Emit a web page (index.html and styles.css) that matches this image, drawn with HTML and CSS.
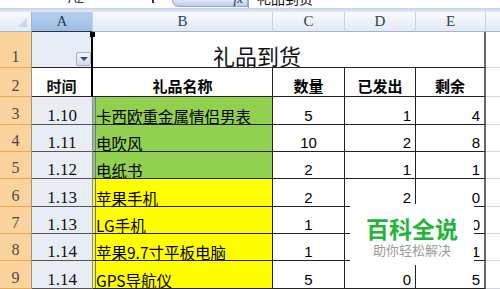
FILE: index.html
```html
<!DOCTYPE html>
<html lang="zh-CN">
<head>
<meta charset="utf-8">
<title>礼品到货</title>
<link rel="stylesheet" href="styles.css">
</head>
<body>
<div class="app">
  <div class="fbar">
    <div class="namebox"><span class="nb-text">A2</span></div>
    <div class="nb-arrow"></div>
    <div class="fx"><span class="fx-text">fx</span></div>
    <div class="formula"><span class="f-text">礼品到货</span></div>
  </div>
  <div class="band"></div>
  <div class="sheet">
    <div class="ch corner"><span class="tri"></span></div>
    <div class="ch sel">A</div>
    <div class="ch">B</div>
    <div class="ch">C</div>
    <div class="ch">D</div>
    <div class="ch">E</div>
    <div class="ch last"></div>

    <div class="rh">1</div>
    <div class="c a a1"><span class="handle"></span><span class="filter"><span class="arrow"></span></span></div>
    <div class="c title">礼品到货</div>
    <div class="c f"></div>

    <div class="rh">2</div>
    <div class="c a a2 hd">时间</div>
    <div class="c hd">礼品名称</div>
    <div class="c hd">数量</div>
    <div class="c hd">已发出</div>
    <div class="c hd e">剩余</div>
    <div class="c f"></div>

    <div class="rh">3</div>
    <div class="c a">1.10</div>
    <div class="c b green">卡西欧重金属情侣男表</div>
    <div class="c n ctr">5</div>
    <div class="c n rt">1</div>
    <div class="c n rt e">4</div>
    <div class="c f"></div>

    <div class="rh">4</div>
    <div class="c a">1.11</div>
    <div class="c b green">电吹风</div>
    <div class="c n ctr">10</div>
    <div class="c n rt">2</div>
    <div class="c n rt e">8</div>
    <div class="c f"></div>

    <div class="rh">5</div>
    <div class="c a">1.12</div>
    <div class="c b green">电纸书</div>
    <div class="c n ctr">2</div>
    <div class="c n rt">1</div>
    <div class="c n rt e">1</div>
    <div class="c f"></div>

    <div class="rh">6</div>
    <div class="c a">1.13</div>
    <div class="c b yellow">苹果手机</div>
    <div class="c n ctr">2</div>
    <div class="c n rt">2</div>
    <div class="c n rt e">0</div>
    <div class="c f"></div>

    <div class="rh">7</div>
    <div class="c a">1.13</div>
    <div class="c b yellow">LG手机</div>
    <div class="c n ctr">1</div>
    <div class="c n rt"></div>
    <div class="c n rt e">0</div>
    <div class="c f"></div>

    <div class="rh">8</div>
    <div class="c a">1.14</div>
    <div class="c b yellow">苹果9.7寸平板电脑</div>
    <div class="c n ctr">1</div>
    <div class="c n rt"></div>
    <div class="c n rt e">1</div>
    <div class="c f"></div>

    <div class="rh">9</div>
    <div class="c a">1.14</div>
    <div class="c b yellow">GPS导航仪</div>
    <div class="c n ctr">5</div>
    <div class="c n rt">0</div>
    <div class="c n rt e">5</div>
    <div class="c f"></div>
  </div>
  <div class="watermark">
    <div class="wm-title">百科全说</div>
    <div class="wm-sub">助你轻松解决</div>
  </div>
</div>
</body>
</html>
```

FILE: styles.css
```css
html, body {
  margin: 0;
  padding: 0;
  background: #fff;
}
.app {
  position: relative;
  width: 500px;
  height: 289px;
  overflow: hidden;
  font-family: "Noto Sans CJK SC", "Liberation Sans", sans-serif;
}

/* formula bar strip (cut off at the top) */
.fbar {
  display: flex;
  align-items: flex-start;
  height: 8px;
  overflow: hidden;
  background: #fff;
}
.namebox {
  width: 152px;
  display: flex;
  justify-content: center;
}
.nb-text {
  font-family: "Liberation Sans", sans-serif;
  font-size: 13px;
  line-height: 13px;
  margin-top: -8px;
  color: #1b2a44;
}
.nb-arrow {
  width: 2px;
  height: 3px;
  background: #333;
}
.fx {
  margin-left: 18px;
  width: 76px;
  height: 7px;
  box-sizing: border-box;
  border: 1px solid #8ea8cc;
  border-top: none;
  border-radius: 0 0 0 9px;
  background: linear-gradient(#dfe8f5, #b9cde8);
  display: flex;
  justify-content: flex-end;
  padding-right: 4px;
}
.fx-text {
  font-family: "Liberation Serif", serif;
  font-style: italic;
  font-size: 13px;
  line-height: 13px;
  margin-top: -8px;
  color: #1b2a44;
}
.formula {
  flex: 1;
  height: 8px;
  border-left: 1px solid #8ea8cc;
  padding-left: 8px;
  overflow: hidden;
}
.f-text {
  display: block;
  font-size: 14px;
  line-height: 14px;
  margin-top: -9px;
  color: #111;
}
.band {
  height: 4px;
  background: linear-gradient(#c3d3e8, #e4ebf5);
}

/* sheet grid */
.sheet {
  display: grid;
  grid-template-columns: 32px 61px 180px 72px 71px 70px 1fr;
  grid-template-rows: 20px 36px 29px 28px 27px 27px 28px 27px 27px 28px;
}
.ch {
  box-sizing: border-box;
  background: linear-gradient(#f8fafd, #e3eaf4);
  border-right: 1px solid #c6d3e4;
  border-bottom: 1px solid #9eb6ce;
  display: flex;
  align-items: center;
  justify-content: center;
  font-family: "Liberation Serif", serif;
  font-size: 15px;
  color: #2b3f5c;
}
.ch.sel {
  background: linear-gradient(#b4cfec, #9cbee5);
  border-bottom-color: #333;
}
.ch.last {
  border-right: none;
}
.corner {
  justify-content: flex-end;
  align-items: flex-end;
  padding: 0 4px 4px 0;
  border-right-color: #9eb6ce;
}
.tri {
  width: 0;
  height: 0;
  border-left: 9px solid transparent;
  border-bottom: 9px solid #cdd6e2;
}
.rh {
  box-sizing: border-box;
  background: #fad49c;
  border-bottom: 1px solid #eca650;
  border-right: 1px solid #9a8f84;
  display: flex;
  align-items: flex-end;
  justify-content: center;
  padding-bottom: 2px;
  font-family: "Liberation Serif", serif;
  font-size: 16px;
  line-height: 16px;
  color: #4a4a4a;
}
.c {
  box-sizing: border-box;
  display: flex;
  align-items: flex-end;
  white-space: nowrap;
  overflow: hidden;
  border-right: 1px solid #222;
  border-bottom: 1px solid #222;
  background: #fff;
  color: #000;
}
.c.e {
  border-right: 2px solid #666;
}
.a {
  background: #e8ecf4;
  justify-content: center;
  border-right: 1px solid #8a8a8a;
  border-bottom: 1px solid #555;
  font-family: "Liberation Serif", serif;
  font-size: 17px;
  line-height: 15px;
  color: #111;
  padding-bottom: 1px;
}
.a1 {
  position: relative;
  overflow: visible;
  justify-content: flex-end;
  border-right: 2px solid #000;
  border-bottom-color: #222;
  padding: 0 0 1px;
}
.a2 {
  background: #fff;
  border-right: 2px solid #000;
  border-bottom-color: #222;
}
.handle {
  position: absolute;
  top: 0;
  right: -4px;
  width: 5px;
  height: 5px;
  background: #000;
  z-index: 2;
}
.filter {
  width: 15px;
  height: 14px;
  box-sizing: border-box;
  border: 1px solid #a3b1c6;
  border-radius: 2px;
  background: linear-gradient(#f4f6fa, #d3dbe7);
  display: flex;
  align-items: center;
  justify-content: center;
}
.arrow {
  width: 0;
  height: 0;
  border-left: 4px solid transparent;
  border-right: 4px solid transparent;
  border-top: 4px solid #2f4c80;
}
.title {
  grid-column: span 4;
  border-right: 2px solid #666;
  padding: 0 0 1px 120px;
  font-size: 22px;
  line-height: 22px;
  color: #111;
}
.hd {
  justify-content: center;
  font-weight: 700;
  font-size: 15px;
  line-height: 15px;
  padding-bottom: 3px;
}
.a.hd {
  font-family: "Noto Sans CJK SC", sans-serif;
  font-size: 15px;
  line-height: 15px;
  padding-bottom: 3px;
}
.b {
  padding-left: 3px;
  font-size: 15.5px;
  line-height: 16px;
  padding-bottom: 0;
  box-shadow: inset 2px 0 0 var(--bg), inset 3px 0 0 #6d63ee;
}
.green { background: #92d050; --bg: #92d050; }
.yellow { background: #ffff00; --bg: #ffff00; }
.n {
  font-family: "Liberation Sans", sans-serif;
  font-size: 15px;
  line-height: 15px;
  padding-bottom: 1px;
}
.ctr { justify-content: center; }
.rt { justify-content: flex-end; padding-right: 4px; }
.c.f {
  border-right: none;
  border-bottom: 1px solid #d0d7e5;
}

/* watermark overlay */
.watermark {
  position: absolute;
  left: 350px;
  top: 204px;
  width: 124px;
  height: 61px;
  background: #fff;
  display: flex;
  flex-direction: column;
  align-items: center;
  padding-top: 11px;
  box-sizing: border-box;
}
.wm-title {
  font-size: 23px;
  line-height: 26px;
  font-weight: 700;
  color: #1fb53b;
}
.wm-sub {
  font-size: 13px;
  line-height: 16px;
  color: #9a9a9a;
  margin-top: 1px;
}
```
